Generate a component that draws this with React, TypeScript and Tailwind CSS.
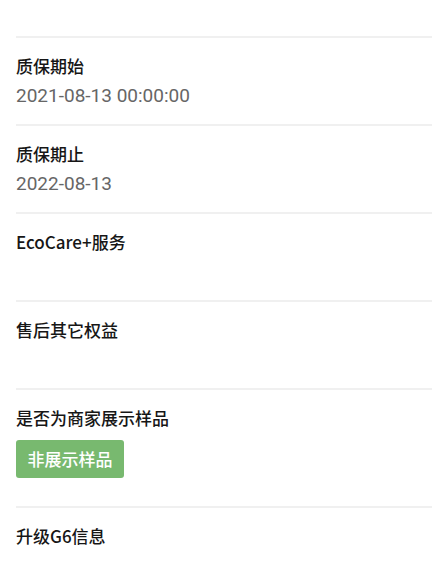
import React from "react";

const font = { fontFamily: '"Noto Sans CJK SC", "Noto Sans", sans-serif' };
const numFont = { fontFamily: 'Roboto, "Noto Sans CJK SC", sans-serif' };

function Row({ title, value, children }: { title: string; value?: string; children?: React.ReactNode }) {
  return (
    <div className="pl-4">
      <div className="h-[2px] bg-[#f0f0f0]" />
      <div className="pt-[16px] pb-[16px] pr-4">
        <div className="text-[17px] leading-[24px] text-[#161616] font-medium">{title}</div>
        {children ?? (
          <div className="mt-[6px] h-[24px] text-[19px] leading-[24px] text-[#666666]" style={numFont}>
            {value}
          </div>
        )}
      </div>
    </div>
  );
}

export default function App() {
  return (
    <div className="w-[432px] h-[568px] bg-white overflow-hidden" style={font}>
      <div className="h-[36px]" />
      <Row title="质保期始" value="2021-08-13 00:00:00" />
      <Row title="质保期止" value="2022-08-13" />
      <Row title="EcoCare+服务" value="" />
      <Row title="售后其它权益" value="" />
      <Row title="是否为商家展示样品">
        <div className="mt-[10px] mb-[12px] flex">
          <div className="w-[108px] h-[38px] rounded-[3px] bg-[#78b96f] text-white text-[17px] font-medium flex items-center justify-center">
            非展示样品
          </div>
        </div>
      </Row>
      <Row title="升级G6信息" value="" />
    </div>
  );
}
